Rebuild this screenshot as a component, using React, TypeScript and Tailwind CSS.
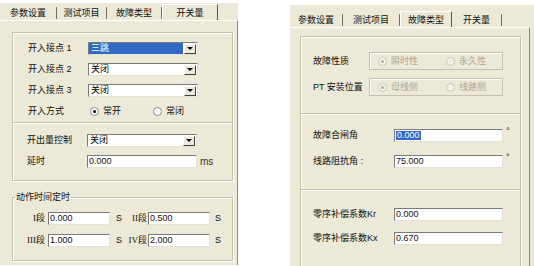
import { ReactNode } from 'react';

const Arrow = () => (
  <div className="w-[12px] h-[10px] mr-px bg-[#ece9d8] border border-t-white border-l-white border-r-[#404040] border-b-[#404040] flex items-center justify-center">
    <div className="w-0 h-0 border-l-[3px] border-r-[3px] border-t-[3px] border-l-transparent border-r-transparent border-t-black" />
  </div>
);

const Select = ({ value, selected }: { value: string; selected?: boolean }) => (
  <div className="w-[110px] h-[13px] bg-white border border-[#7a7a7a] border-r-[#e4e2d6] border-b-[#e4e2d6] flex items-center">
    <div
      className={`flex-1 h-full flex items-center pl-[2px] mr-[1px] ${
        selected ? 'bg-[#316ac5] text-white' : 'text-black'
      }`}
    >
      {value}
    </div>
    <Arrow />
  </div>
);

const Input = ({ value, w, selected }: { value: string; w: string; selected?: boolean }) => (
  <div
    className={`${w} h-[13px] bg-white border border-[#7a7a7a] border-r-[#e4e2d6] border-b-[#e4e2d6] flex items-center pl-px`}
  >
    <span className={selected ? 'bg-[#316ac5] text-white px-px' : ''}>{value}</span>
  </div>
);

const Radio = ({ checked, label, disabled }: { checked?: boolean; label: string; disabled?: boolean }) => (
  <div className={`flex items-center gap-[4px] ${disabled ? 'text-[#aca899]' : ''}`}>
    <div
      className={`w-[9px] h-[9px] rounded-full border ${
        disabled ? 'border-[#c9c7ba] bg-[#f2f1ea]' : 'border-[#8a8a8a] bg-white'
      } flex items-center justify-center`}
    >
      {checked && <div className={`w-[3px] h-[3px] rounded-full ${disabled ? 'bg-[#aca899]' : 'bg-black'}`} />}
    </div>
    {label}
  </div>
);

const Tab = ({ label, w, active }: { label: string; w: string; active?: boolean }) =>
  active ? (
    <div
      className={`${w} h-[17px] -mb-px flex items-center justify-center bg-[#ece9d8] border-t border-l border-white border-r border-r-[#555]`}
    >
      {label}
    </div>
  ) : (
    <div className={`${w} h-[14px] flex items-center`}>
      <div className="flex-1 text-center">{label}</div>
      <div className="w-px h-[12px] bg-[#707070]" />
    </div>
  );

const Group = ({ children, className }: { children: ReactNode; className: string }) => (
  <div
    className={`border border-[#c3c0ae] shadow-[inset_1px_1px_0_#fff,1px_1px_0_#fff] ${className}`}
  >
    {children}
  </div>
);

const Row = ({ label, children, h, lw }: { label: string; children: ReactNode; h: string; lw: string }) => (
  <div className={`${h} flex items-center`}>
    <div className={lw}>{label}</div>
    {children}
  </div>
);

export default function App() {
  return (
    <div className="w-[534px] h-[266px] bg-white flex text-[9px] text-[#111] font-['Liberation_Sans','Noto_Sans_CJK_SC',sans-serif] leading-none">
      {/* left window */}
      <div className="w-[238px] h-[262px] mt-[3px] bg-[#ece9d8] flex flex-col">
        <div className="h-[17px] flex items-end">
          <Tab label="参数设置" w="w-[57px]" />
          <Tab label="测试项目" w="w-[50px]" />
          <Tab label="故障类型" w="w-[55px]" />
          <Tab label="开关量" w="w-[56px]" active />
        </div>
        <div className="flex-1 border-t border-white border-r border-r-[#8a8a8a] pl-[12px] pr-[5px] pt-[11px]">
          <Group className="w-[221px] pt-[5px] pl-[15px]">
            <Row label="开入接点 1" h="h-[21px]" lw="w-[60px]">
              <Select value="三跳" selected />
            </Row>
            <Row label="开入接点 2" h="h-[21px]" lw="w-[60px]">
              <Select value="关闭" />
            </Row>
            <Row label="开入接点 3" h="h-[21px]" lw="w-[60px]">
              <Select value="关闭" />
            </Row>
            <Row label="开入方式" h="h-[21px]" lw="w-[62px]">
              <div className="flex gap-[32px]">
                <Radio checked label="常开" />
                <Radio label="常闭" />
              </div>
            </Row>
          </Group>
          <Group className="w-[221px] -mt-px pt-[7px] pb-[8px] pl-[14px]">
            <Row label="开出量控制" h="h-[21px]" lw="w-[60px]">
              <Select value="关闭" />
            </Row>
            <Row label="延时" h="h-[21px]" lw="w-[60px]">
              <Input value="0.000" w="w-[110px]" />
              <span className="ml-[3px] text-[10px] text-[#333]">ms</span>
            </Row>
          </Group>
          <fieldset className="w-[221px] mt-[12px] border border-[#c3c0ae] shadow-[inset_1px_1px_0_#fff,1px_1px_0_#fff] pb-[9px] pt-[5px]">
            <legend className="ml-[2px] px-px">动作时间定时</legend>
            {[
              ['I段', '0.000', 'II段', '0.500'],
              ['III段', '1.000', 'IV段', '2.000'],
            ].map(([a, va, b, vb]) => (
              <div key={a} className="h-[22px] flex items-center pl-[9px]">
                <div className="w-[23px] text-right font-['Liberation_Serif','Noto_Sans_CJK_SC',serif]">{a}</div>
                <div className="ml-[3px]">
                  <Input value={va} w="w-[62px]" />
                </div>
                <span className="ml-[6px] w-[8px]">S</span>
                <div className="ml-[2px] w-[21px] text-right font-['Liberation_Serif','Noto_Sans_CJK_SC',serif]">{b}</div>
                <div className="ml-px">
                  <Input value={vb} w="w-[62px]" />
                </div>
                <span className="ml-[5px]">S</span>
              </div>
            ))}
          </fieldset>
        </div>
      </div>

      {/* right window */}
      <div className="ml-[52px] mt-[5px] w-[244px] flex flex-col">
        <div className="h-px bg-[#a8a8a8]" />
        <div className="flex-1 bg-[#ece9d8] flex flex-col">
          <div className="h-[22px] flex items-end">
            <Tab label="参数设置" w="w-[53px]" />
            <Tab label="测试项目" w="w-[57px]" />
            <Tab label="故障类型" w="w-[52px]" active />
            <Tab label="开关量" w="w-[50px]" />
          </div>
          <div className="flex-1 border-t border-white border-r border-r-[#8a8a8a] mr-[4px] pl-[10px] pt-[8px]">
            <Group className="w-[221px] pt-[11px] pb-[13px] pl-[12px]">
              <Row label="故障性质" h="h-[26px]" lw="w-[56px]">
                <div className="w-[134px] h-[18px] border border-[#c3c0ae] shadow-[inset_1px_1px_0_#fff] flex items-center pl-[8px] gap-[28px]">
                  <Radio checked disabled label="瞬时性" />
                  <Radio disabled label="永久性" />
                </div>
              </Row>
              <Row label="PT 安装位置" h="h-[26px]" lw="w-[56px]">
                <div className="w-[134px] h-[18px] border border-[#c3c0ae] shadow-[inset_1px_1px_0_#fff] flex items-center pl-[8px] gap-[28px]">
                  <Radio checked disabled label="母线侧" />
                  <Radio disabled label="线路侧" />
                </div>
              </Row>
            </Group>
            <Group className="w-[221px] -mt-px pt-[8px] pb-[15px] pl-[12px]">
              <Row label="故障合闸角" h="h-[26px]" lw="w-[81px]">
                <Input value="0.000" w="w-[109px]" selected />
                <span className="ml-[3px] self-start mt-[5px]">°</span>
              </Row>
              <Row label="线路阻抗角 :" h="h-[26px]" lw="w-[81px]">
                <Input value="75.000" w="w-[109px]" />
                <span className="ml-[3px] self-start mt-[5px]">°</span>
              </Row>
            </Group>
            <Group className="w-[221px] h-[80px] -mt-px pt-[12px] pl-[12px] border-b-0">
              <Row label="零序补偿系数Kr" h="h-[24px]" lw="w-[81px]">
                <Input value="0.000" w="w-[109px]" />
              </Row>
              <Row label="零序补偿系数Kx" h="h-[24px]" lw="w-[81px]">
                <Input value="0.670" w="w-[109px]" />
              </Row>
            </Group>
          </div>
        </div>
      </div>
    </div>
  );
}
